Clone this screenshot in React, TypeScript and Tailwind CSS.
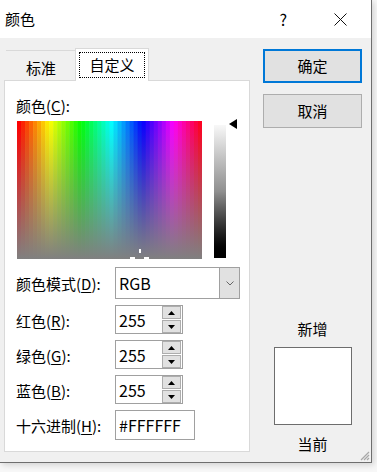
import React from 'react';

const font = "font-['Noto_Sans_CJK_SC','Noto_Sans',sans-serif]";

// Spectrum columns: hue left to right, fades to gray at the bottom
const columns = Array.from({ length: 46 }, (_, i) => i);

function Spectrum() {
  const w = 185;
  const h = 138;
  const cw = w / columns.length;
  return (
    <svg width={w} height={h} viewBox={`0 0 ${w} ${h}`} className="block">
      <defs>
        <linearGradient id="fade" x1="0" y1="0" x2="0" y2="1">
          <stop offset="0" stopColor="#808080" stopOpacity="0" />
          <stop offset="1" stopColor="#808080" stopOpacity="1" />
        </linearGradient>
      </defs>
      {columns.map((i) => (
        <rect
          key={i}
          x={i * cw}
          y={0}
          width={cw + 0.5}
          height={h}
          fill={`hsl(${(i / columns.length) * 360}, 100%, 50%)`}
        />
      ))}
      <rect x={0} y={0} width={w} height={h} fill="url(#fade)" />
      {/* crosshair */}
      <rect x={122} y={128} width={2} height={4} fill="#fff" />
      <rect x={113} y={136} width={5} height={2} fill="#fff" />
      <rect x={127} y={136} width={5} height={2} fill="#fff" />
    </svg>
  );
}

function Label({ text, k, rest = '):' }: { text: string; k: string; rest?: string }) {
  return (
    <span className="text-[15px] leading-5 text-black">
      {text}(<span className="underline underline-offset-2">{k}</span>{rest}
    </span>
  );
}

function Spinner({ value }: { value: string }) {
  return (
    <div className="w-[68px] h-[29px] border border-[#a0a0a0] bg-white flex items-center">
      <span className="flex-1 pl-[3px] text-[16px] leading-none text-black">{value}</span>
      <div className="flex flex-col w-[19px] h-[27px] mr-px">
        <div className="h-[13px] bg-[#e1e1e1] border border-[#adadad] flex items-center justify-center">
          <svg width="7" height="4" viewBox="0 0 7 4"><path d="M0 4 L3.5 0 L7 4 Z" fill="#000" /></svg>
        </div>
        <div className="h-[13px] mt-px bg-[#e1e1e1] border border-[#adadad] flex items-center justify-center">
          <svg width="7" height="4" viewBox="0 0 7 4"><path d="M0 0 L3.5 4 L7 0 Z" fill="#000" /></svg>
        </div>
      </div>
    </div>
  );
}

export default function App() {
  return (
    <div className={`w-[377px] h-[472px] bg-[#f7f7f7] ${font}`}>
      <div className="relative w-[372px] h-[463px] bg-[#f0f0f0] border-r border-b border-[#6e6e6e] shadow-[2px_2px_6px_rgba(0,0,0,0.15)] flex flex-col">
        {/* Title bar */}
        <div className="h-[38px] bg-white flex items-center pl-[5px]">
          <span className="text-[15px] text-black">颜色</span>
          <span className="ml-auto mr-[47px] text-[16px] text-black">?</span>
          <svg width="13" height="13" viewBox="0 0 13 13" className="mr-[24px]">
            <path d="M0.5 0.5 L12.5 12.5 M12.5 0.5 L0.5 12.5" stroke="#111" strokeWidth="1" />
          </svg>
        </div>

        <div className="flex">
          {/* Left: tabs */}
          <div className="ml-[4px] mt-[10px] w-[246px]">
            <div className="flex items-end h-[32px]">
              <div className="ml-[2px] w-[70px] h-[30px] border-t border-[#d9d9d9] flex items-center justify-center">
                <span className="text-[15px] text-black mt-[5px]">标准</span>
              </div>
              <div className="-ml-px w-[74px] h-[33px] -mb-px bg-white border border-b-0 border-[#d9d9d9] relative z-10 p-[3px]">
                <div className="h-full border border-dotted border-black flex items-center justify-center">
                  <span className="text-[15px] text-black">自定义</span>
                </div>
              </div>
            </div>
            <div className="h-[372px] bg-white border border-[#d9d9d9] pl-[11px] pt-[12px]">
              <Label text="颜色" k="C" />
              <div className="flex mt-[4px] ml-px">
                <Spectrum />
                <div className="ml-[12px] mt-[4px] w-[12px] h-[133px] bg-linear-to-b from-[#f8f8f8] via-[#8f8f8f] to-black" />
                <svg width="8" height="10" viewBox="0 0 8 10" className="ml-[3px] mt-[-2px]">
                  <path d="M0 5 L8 0 L8 10 Z" fill="#000" />
                </svg>
              </div>

              <div className="flex items-center mt-[8px]">
                <div className="w-[99px]"><Label text="颜色模式" k="D" /></div>
                <div className="w-[125px] h-[32px] border border-[#a0a0a0] bg-white flex items-center">
                  <span className="flex-1 pl-[3px] text-[16px] text-black">RGB</span>
                  <div className="w-[20px] h-full bg-[#e1e1e1] border-l border-[#a0a0a0] flex items-center justify-center">
                    <svg width="8" height="5" viewBox="0 0 8 5"><path d="M0.5 0.5 L4 4 L7.5 0.5" stroke="#666" fill="none" /></svg>
                  </div>
                </div>
              </div>

              <div className="flex items-center mt-[6px]">
                <div className="w-[99px]"><Label text="红色" k="R" /></div>
                <Spinner value="255" />
              </div>
              <div className="flex items-center mt-[6px]">
                <div className="w-[99px]"><Label text="绿色" k="G" /></div>
                <Spinner value="255" />
              </div>
              <div className="flex items-center mt-[6px]">
                <div className="w-[99px]"><Label text="蓝色" k="B" /></div>
                <Spinner value="255" />
              </div>
              <div className="flex items-center mt-[6px]">
                <div className="w-[99px]"><Label text="十六进制" k="H" /></div>
                <div className="w-[80px] h-[30px] border border-[#a0a0a0] bg-white flex items-center">
                  <span className="pl-[3px] text-[16px] text-black">#FFFFFF</span>
                </div>
              </div>
            </div>
          </div>

          {/* Right: buttons and preview */}
          <div className="ml-[13px] mt-[11px] w-[99px] flex flex-col items-center">
            <button className="w-[99px] h-[34px] bg-[#e1e1e1] border-2 border-[#0078d7] text-[15px] text-black">确定</button>
            <button className="mt-[11px] w-[99px] h-[34px] bg-[#e1e1e1] border border-[#adadad] text-[15px] text-black">取消</button>
            <span className="mt-[191px] text-[15px] leading-5 text-black">新增</span>
            <div className="mt-[8px] w-[78px] h-[78px] bg-white border border-[#6d6d6d]" />
            <span className="mt-[9px] text-[15px] leading-5 text-black">当前</span>
          </div>
        </div>

        {/* resize grip */}
        <svg width="11" height="11" viewBox="0 0 11 11" className="absolute right-[1px] bottom-[1px]">
          <path d="M10 2 L2 10 M10 5 L5 10 M10 8 L8 10" stroke="#a8a8a8" strokeWidth="1.2" />
        </svg>
      </div>
    </div>
  );
}
